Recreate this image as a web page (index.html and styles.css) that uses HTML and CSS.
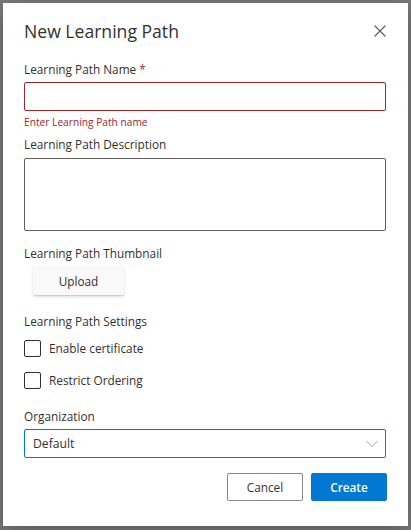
FILE: index.html
```html
<!DOCTYPE html>
<html lang="en">
<head>
<meta charset="utf-8">
<title>New Learning Path</title>
<link rel="stylesheet" href="styles.css">
</head>
<body>
<div class="overlay">
  <div class="dialog">
    <div class="header">
      <h1 class="title">New Learning Path</h1>
      <button class="close" aria-label="Close">
        <svg width="12" height="12" viewBox="0 0 12 12"><path d="M0.5 0.5 L11.5 11.5 M11.5 0.5 L0.5 11.5" stroke="#605e5c" stroke-width="1.1" fill="none"/></svg>
      </button>
    </div>

    <div class="field f-name">
      <label class="label">Learning Path Name <span class="req">*</span></label>
      <div class="input input-error"></div>
      <div class="error">Enter Learning Path name</div>
    </div>

    <div class="field f-desc">
      <label class="label">Learning Path Description</label>
      <div class="textarea"></div>
    </div>

    <div class="field f-thumb">
      <label class="label">Learning Path Thumbnail</label>
      <button class="upload">Upload</button>
    </div>

    <div class="field f-settings">
      <label class="label">Learning Path Settings</label>
      <div class="check"><span class="box"></span><span class="check-text">Enable certificate</span></div>
      <div class="check"><span class="box"></span><span class="check-text">Restrict Ordering</span></div>
    </div>

    <div class="field f-org">
      <label class="label">Organization</label>
      <div class="dropdown">
        <span class="dd-text">Default</span>
        <svg width="12" height="8" viewBox="0 0 12 8"><path d="M0.5 1 L6 6.5 L11.5 1" stroke="#a19f9d" stroke-width="1" fill="none"/></svg>
      </div>
    </div>

    <div class="footer">
      <button class="btn btn-default">Cancel</button>
      <button class="btn btn-primary">Create</button>
    </div>
  </div>
</div>
</body>
</html>
```

FILE: styles.css
```css
* { box-sizing: border-box; }
html, body { margin: 0; padding: 0; }
body {
  width: 411px;
  height: 530px;
  overflow: hidden;
  font-family: "Segoe UI", "Open Sans", "Noto Sans", sans-serif;
  color: #323130;
}
.overlay {
  width: 411px;
  height: 530px;
  background: #797979;
  padding: 3px;
}
.dialog {
  width: 405px;
  height: 523px;
  background: #fff;
  padding: 13px 21px 0 21px;
  box-shadow: 0 6px 20px rgba(0,0,0,0.25);
}
.header {
  display: flex;
  align-items: center;
  justify-content: space-between;
  height: 30px;
}
.title {
  margin: 0;
  font-size: 17.6px;
  font-weight: 400;
  line-height: 30px;
  color: #323130;
}
.close {
  border: 0;
  background: none;
  padding: 0;
  width: 12px;
  height: 12px;
  margin-right: 1px;
  display: flex;
}
.field { display: flex; flex-direction: column; align-items: flex-start; }
.label {
  font-size: 11.8px;
  font-weight: 500;
  line-height: 20px;
  color: #323130;
}
.req { color: #a4262c; }
.f-name { margin-top: 13px; }
.input {
  margin-top: 3px;
  width: 362px;
  height: 29px;
  border: 1px solid #605e5c;
  border-radius: 2px;
}
.input-error { border-color: #a4262c; }
.error {
  font-size: 10.2px;
  line-height: 16px;
  margin-top: 3px;
  color: #a4262c;
}
.f-desc { margin-top: 4px; }
.textarea {
  margin-top: 4px;
  width: 362px;
  height: 73px;
  border: 1px solid #605e5c;
  border-radius: 2px;
}
.f-thumb { margin-top: 12px; }
.upload {
  margin: 4px 0 0 9px;
  width: 91px;
  height: 28px;
  border: 0;
  border-radius: 2px;
  background: #f9f9f9;
  box-shadow: 0 1.6px 3.6px rgba(0,0,0,0.13), 0 0.3px 0.9px rgba(0,0,0,0.11);
  font-family: inherit;
  font-size: 11.8px;
  font-weight: 500;
  color: #323130;
  padding: 0;
}
.f-settings { margin-top: 16px; }
.check {
  display: flex;
  align-items: center;
  height: 17px;
  margin-top: 9px;
}
.check + .check { margin-top: 15px; }
.box {
  width: 17px;
  height: 17px;
  border: 1px solid #323130;
  border-radius: 2px;
  flex: none;
}
.check-text {
  margin-left: 8px;
  font-size: 11.8px;
  line-height: 17px;
  color: #323130;
}
.f-org { margin-top: 17px; }
.dropdown {
  margin-top: 3px;
  width: 362px;
  height: 29px;
  border: 1px solid #0078d4;
  border-radius: 2px;
  display: flex;
  align-items: center;
  justify-content: space-between;
  padding: 0 7px 0 8px;
}
.dd-text { font-size: 12.2px; color: #323130; }
.footer {
  margin-top: 15px;
  display: flex;
  justify-content: flex-end;
  gap: 8px;
}
.btn {
  width: 76px;
  height: 28px;
  border-radius: 2px;
  font-family: inherit;
  font-size: 11.8px;
  padding: 0;
}
.btn-default {
  background: #fff;
  border: 1px solid #8a8886;
  color: #323130;
  font-weight: 500;
}
.btn-primary {
  background: #0078d4;
  border: 1px solid #0078d4;
  color: #fff;
  font-weight: 600;
}
```
